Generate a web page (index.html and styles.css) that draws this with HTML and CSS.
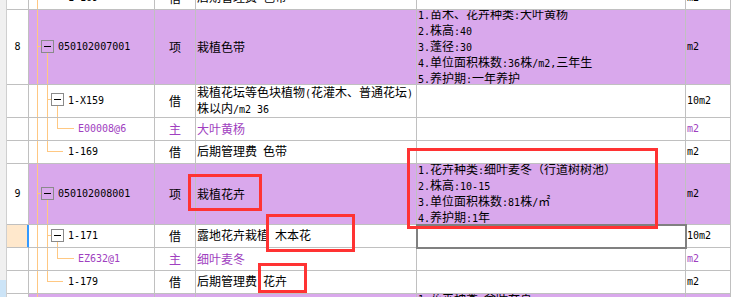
FILE: index.html
```html
<!DOCTYPE html>
<html lang="zh-CN">
<head>
<meta charset="utf-8">
<title>清单</title>
<link rel="stylesheet" href="styles.css">
</head>
<body>
<div class="page">
  <div class="strip"><div class="strip-fill"></div><div class="strip-sel"></div></div>
  <div class="grid-wrap">
    <div class="table">
      <div class="row h23">
        <div class="c idx m"></div>
        <div class="c code"><svg class="tree" width="39" height="22"><path class="ln" d="M8.5 0V22M18.5 0V10.5M18 10.5H34"/></svg><span class="m">1-169</span></div>
        <div class="c type">借</div>
        <div class="c desc"><div>后期管理费<span class="m">&nbsp;</span>色带</div></div>
        <div class="c feat"></div>
        <div class="c unit m">m2</div>
      </div>

      <div class="row h75 grp">
        <div class="c idx m">8</div>
        <div class="c code"><svg class="tree" width="29" height="74"><path class="ln" d="M8.5 0V74M9 36.5H12M18.5 43V74"/><rect class="bx" x="12.5" y="30.5" width="12" height="12"/><path class="mn" d="M15 36.5H22"/></svg><span class="m">050102007001</span></div>
        <div class="c type">项</div>
        <div class="c desc"><div>栽植色带</div></div>
        <div class="c feat"><div><span class="m">1.</span>苗木、花卉种类<span class="m">:</span>大叶黄杨<br><span class="m">2.</span>株高<span class="m">:40</span><br><span class="m">3.</span>蓬径<span class="m">:30</span><br><span class="m">4.</span>单位面积株数<span class="m">:36</span>株<span class="m">/m2,</span>三年生<br><span class="m">5.</span>养护期<span class="m">:</span>一年养护</div></div>
        <div class="c unit m">m2</div>
      </div>

      <div class="row h33">
        <div class="c idx m"></div>
        <div class="c code"><svg class="tree" width="39" height="32"><path class="ln" d="M8.5 0V32M18.5 0V32M19 14.5H22M28.5 21V32"/><rect class="bx" x="22.5" y="8.5" width="12" height="12"/><path class="mn" d="M25 14.5H32"/></svg><span class="m">1-X159</span></div>
        <div class="c type">借</div>
        <div class="c desc"><div>栽植花坛等色块植物<span class="m">(</span>花灌木、普通花坛<span class="m">)</span><br>株以内<span class="m">/m2&nbsp;36</span></div></div>
        <div class="c feat"></div>
        <div class="c unit m">10m2</div>
      </div>

      <div class="row h23 sub">
        <div class="c idx m"></div>
        <div class="c code"><svg class="tree" width="49" height="22"><path class="ln" d="M8.5 0V22M18.5 0V22M28.5 0V10.5M28 10.5H45"/></svg><span class="m">E00008@6</span></div>
        <div class="c type">主</div>
        <div class="c desc"><div>大叶黄杨</div></div>
        <div class="c feat"></div>
        <div class="c unit m">m2</div>
      </div>

      <div class="row h23">
        <div class="c idx m"></div>
        <div class="c code"><svg class="tree" width="39" height="22"><path class="ln" d="M8.5 0V22M18.5 0V10.5M18 10.5H34"/></svg><span class="m">1-169</span></div>
        <div class="c type">借</div>
        <div class="c desc"><div>后期管理费<span class="m">&nbsp;</span>色带</div></div>
        <div class="c feat"></div>
        <div class="c unit m">m2</div>
      </div>

      <div class="row h61 grp">
        <div class="c idx m">9</div>
        <div class="c code"><svg class="tree" width="29" height="60"><path class="ln" d="M8.5 0V60M9 29.5H12M18.5 36V60"/><rect class="bx" x="12.5" y="23.5" width="12" height="12"/><path class="mn" d="M15 29.5H22"/></svg><span class="m">050102008001</span></div>
        <div class="c type">项</div>
        <div class="c desc"><div>栽植花卉</div></div>
        <div class="c feat"><div><span class="m">1.</span>花卉种类<span class="m">:</span>细叶麦冬（行道树树池）<br><span class="m">2.</span>株高<span class="m">:10-15</span><br><span class="m">3.</span>单位面积株数<span class="m">:81</span>株<span class="m">/</span>㎡<br><span class="m">4.</span>养护期<span class="m">:1</span>年</div></div>
        <div class="c unit m">m2</div>
      </div>

      <div class="row h23">
        <div class="c idx m sel"></div>
        <div class="c code"><svg class="tree" width="39" height="22"><path class="ln" d="M8.5 0V22M18.5 0V22M19 10.5H22M28.5 17V22"/><rect class="bx" x="22.5" y="4.5" width="12" height="12"/><path class="mn" d="M25 10.5H32"/></svg><span class="m">1-171</span></div>
        <div class="c type">借</div>
        <div class="c desc"><div>露地花卉栽植<span class="m">&nbsp;</span>木本花</div></div>
        <div class="c feat focus"></div>
        <div class="c unit m">10m2</div>
      </div>

      <div class="row h23 sub">
        <div class="c idx m"></div>
        <div class="c code"><svg class="tree" width="49" height="22"><path class="ln" d="M8.5 0V22M18.5 0V22M28.5 0V10.5M28 10.5H45"/></svg><span class="m">EZ632@1</span></div>
        <div class="c type">主</div>
        <div class="c desc"><div>细叶麦冬</div></div>
        <div class="c feat"></div>
        <div class="c unit m">m2</div>
      </div>

      <div class="row h23">
        <div class="c idx m"></div>
        <div class="c code"><svg class="tree" width="39" height="22"><path class="ln" d="M8.5 0V22M18.5 0V10.5M18 10.5H34"/></svg><span class="m">1-179</span></div>
        <div class="c type">借</div>
        <div class="c desc"><div>后期管理费<span class="m">&nbsp;</span>花卉</div></div>
        <div class="c feat"></div>
        <div class="c unit m">m2</div>
      </div>

      <div class="row h75 grp">
        <div class="c idx m">10</div>
        <div class="c code"><svg class="tree" width="29" height="74"><path class="ln" d="M8.5 0V74M9 36.5H12M18.5 43V74"/><rect class="bx" x="12.5" y="30.5" width="12" height="12"/><path class="mn" d="M15 36.5H22"/></svg><span class="m">050102008002</span></div>
        <div class="c type">项</div>
        <div class="c desc"><div>栽植花卉</div></div>
        <div class="c feat"><div><span class="m">1.</span>花卉种类<span class="m">:</span>金叶女贞<br><span class="m">2.</span>株高<span class="m">:30</span><br><span class="m">3.</span>蓬径<span class="m">:25</span><br><span class="m">4.</span>单位面积株数<span class="m">:25</span>株<span class="m">/m2</span><br><span class="m">5.</span>养护期<span class="m">:1</span>年</div></div>
        <div class="c unit m">m2</div>
      </div>
    </div>
  </div>

  <div class="mark mark-a"></div>
  <div class="mark mark-b"></div>
  <div class="mark mark-c"></div>
  <div class="mark mark-d"></div>
</div>
</body>
</html>
```

FILE: styles.css
```css
* { box-sizing: border-box; }

html, body {
  margin: 0;
  padding: 0;
  background: #ffffff;
}

body {
  font-family: "Noto Sans CJK SC", "Noto Sans", sans-serif;
  font-size: 12px;
  color: #000000;
}

.page {
  position: relative;
  width: 731px;
  height: 297px;
  overflow: hidden;
  display: flex;
}

.strip {
  flex: none;
  width: 7px;
  background: #f0f0f0;
  border-right: 1px solid #cfcfcf;
  display: flex;
  flex-direction: column;
}

.strip-fill { flex: 1; }

.strip-sel {
  height: 17px;
  background: #cce4f7;
}

.grid-wrap {
  flex: 1;
  min-width: 0;
}

.table {
  margin-top: -13px;
}

.row {
  display: grid;
  grid-template-columns: 22px 126px 41px 221px 269px 1fr;
}

.h23 { height: 23px; }
.h33 { height: 33px; }
.h61 { height: 61px; }
.h75 { height: 75px; }

.c {
  display: flex;
  align-items: center;
  padding: 0 1px;
  line-height: 14px;
  white-space: nowrap;
  overflow: hidden;
  border-right: 1px solid #c0c0c0;
  border-bottom: 1px solid #c0c0c0;
  background: #ffffff;
}

.m {
  font-family: "DejaVu Sans Mono", "Liberation Mono", monospace;
  font-size: 10px;
}

.idx {
  justify-content: center;
}

.code {
  padding: 0;
}

.type {
  justify-content: center;
}

.grp .c:not(.idx) {
  background: #d9a8ec;
}

.sub .code,
.sub .type,
.sub .desc,
.sub .unit {
  color: #a040c0;
}

.sel {
  background: #ffe8cc;
  border-right-color: #3399ff;
  box-shadow: inset -1px 0 0 #3399ff;
}

.focus {
  outline: 2px solid #808080;
  outline-offset: -1px;
  position: relative;
  z-index: 1;
}

.tree {
  display: block;
  flex: none;
  shape-rendering: crispEdges;
}

.ln {
  fill: none;
  stroke: #ffc882;
  stroke-width: 1;
}

.bx {
  fill: none;
  stroke: #8a8a8a;
  stroke-width: 1;
}

.mn {
  fill: none;
  stroke: #000000;
  stroke-width: 1;
}

.mark {
  position: absolute;
  border: 3px solid #ff3333;
  z-index: 5;
  pointer-events: none;
}

.mark-a { left: 188px; top: 174px; width: 74px; height: 37px; }
.mark-b { left: 407px; top: 148px; width: 251px; height: 81px; }
.mark-c { left: 266px; top: 214px; width: 89px; height: 38px; }
.mark-d { left: 258px; top: 263px; width: 49px; height: 30px; }
```
